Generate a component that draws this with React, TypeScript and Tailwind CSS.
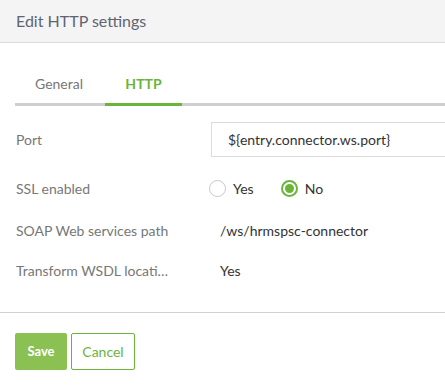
import React from 'react';

const font = { fontFamily: 'Lato, "Open Sans", sans-serif' };

function Radio({ checked, label }: { checked?: boolean; label: string }) {
  return (
    <label className="flex items-center gap-[7px] text-[14px] text-[#333]">
      {checked ? (
        <span className="flex h-[17px] w-[17px] items-center justify-center rounded-full border-2 border-[#6ab43a] bg-white">
          <span className="h-[9px] w-[9px] rounded-full bg-[#6ab43a]" />
        </span>
      ) : (
        <span className="h-[17px] w-[17px] rounded-full border border-[#c8c8c8] bg-white" />
      )}
      {label}
    </label>
  );
}

function Row({ label, children, className }: { label: string; children: React.ReactNode; className: string }) {
  return (
    <div className={`flex items-center ${className}`}>
      <div className="w-[195px] shrink-0 truncate text-[14px] text-[#777]">{label}</div>
      <div className="flex min-w-0 flex-1 items-center">{children}</div>
    </div>
  );
}

export default function App() {
  return (
    <div className="h-[386px] w-[445px] overflow-hidden bg-white" style={font}>
      <div className="flex h-[43px] items-center border-b border-[#dcdcdc] bg-[#f4f4f4] px-4">
        <h1 className="text-[16px] text-[#5f6470]">Edit HTTP settings</h1>
      </div>

      <div className="pl-[15px]">
        <div className="mt-5 flex border-b-[3px] border-[#cfcfd3]">
          <div className="-mb-[3px] flex h-[43px] w-[90px] items-center pb-[3px] pl-5 text-[14px] text-[#777]">General</div>
          <div className="-mb-[3px] flex h-[43px] w-[77px] items-center justify-center border-b-[3px] border-[#6ab43a] text-[14px] font-bold text-[#6ab43a]">
            HTTP
          </div>
        </div>
      </div>

      <div className="pl-4">
        <Row label="Port" className="mt-4 h-[35px]">
          <input
            readOnly
            value={'${entry.connector.ws.port}'}
            className="h-[35px] w-[260px] shrink-0 border border-[#dcdcdc] bg-white pl-4 text-[14px] text-[#333] outline-none"
            style={font}
          />
        </Row>
        <Row label="SSL enabled" className="mt-[14px] h-[34px]">
          <div className="-ml-[2px] flex items-center gap-[27px]">
            <Radio label="Yes" />
            <Radio checked label="No" />
          </div>
        </Row>
        <Row label="SOAP Web services path" className="mt-2 h-[34px]">
          <span className="pl-[9px] text-[14px] text-[#333]">/ws/hrmspsc-connector</span>
        </Row>
        <Row label="Transform WSDL locati…" className="mt-[6px] h-[34px]">
          <span className="pl-[9px] text-[14px] text-[#333]">Yes</span>
        </Row>
      </div>

      <div className="mt-[25px] border-t border-[#d0d0d0]" />

      <div className="flex gap-1 px-[15px] pt-5">
        <button className="h-[37px] w-[52px] rounded-[2px] bg-[#8bc152] text-[13px] font-bold text-white">Save</button>
        <button className="h-[37px] w-[64px] rounded-[2px] border border-[#6ab43a] bg-white text-[14px] text-[#6ab43a]">
          Cancel
        </button>
      </div>
    </div>
  );
}
